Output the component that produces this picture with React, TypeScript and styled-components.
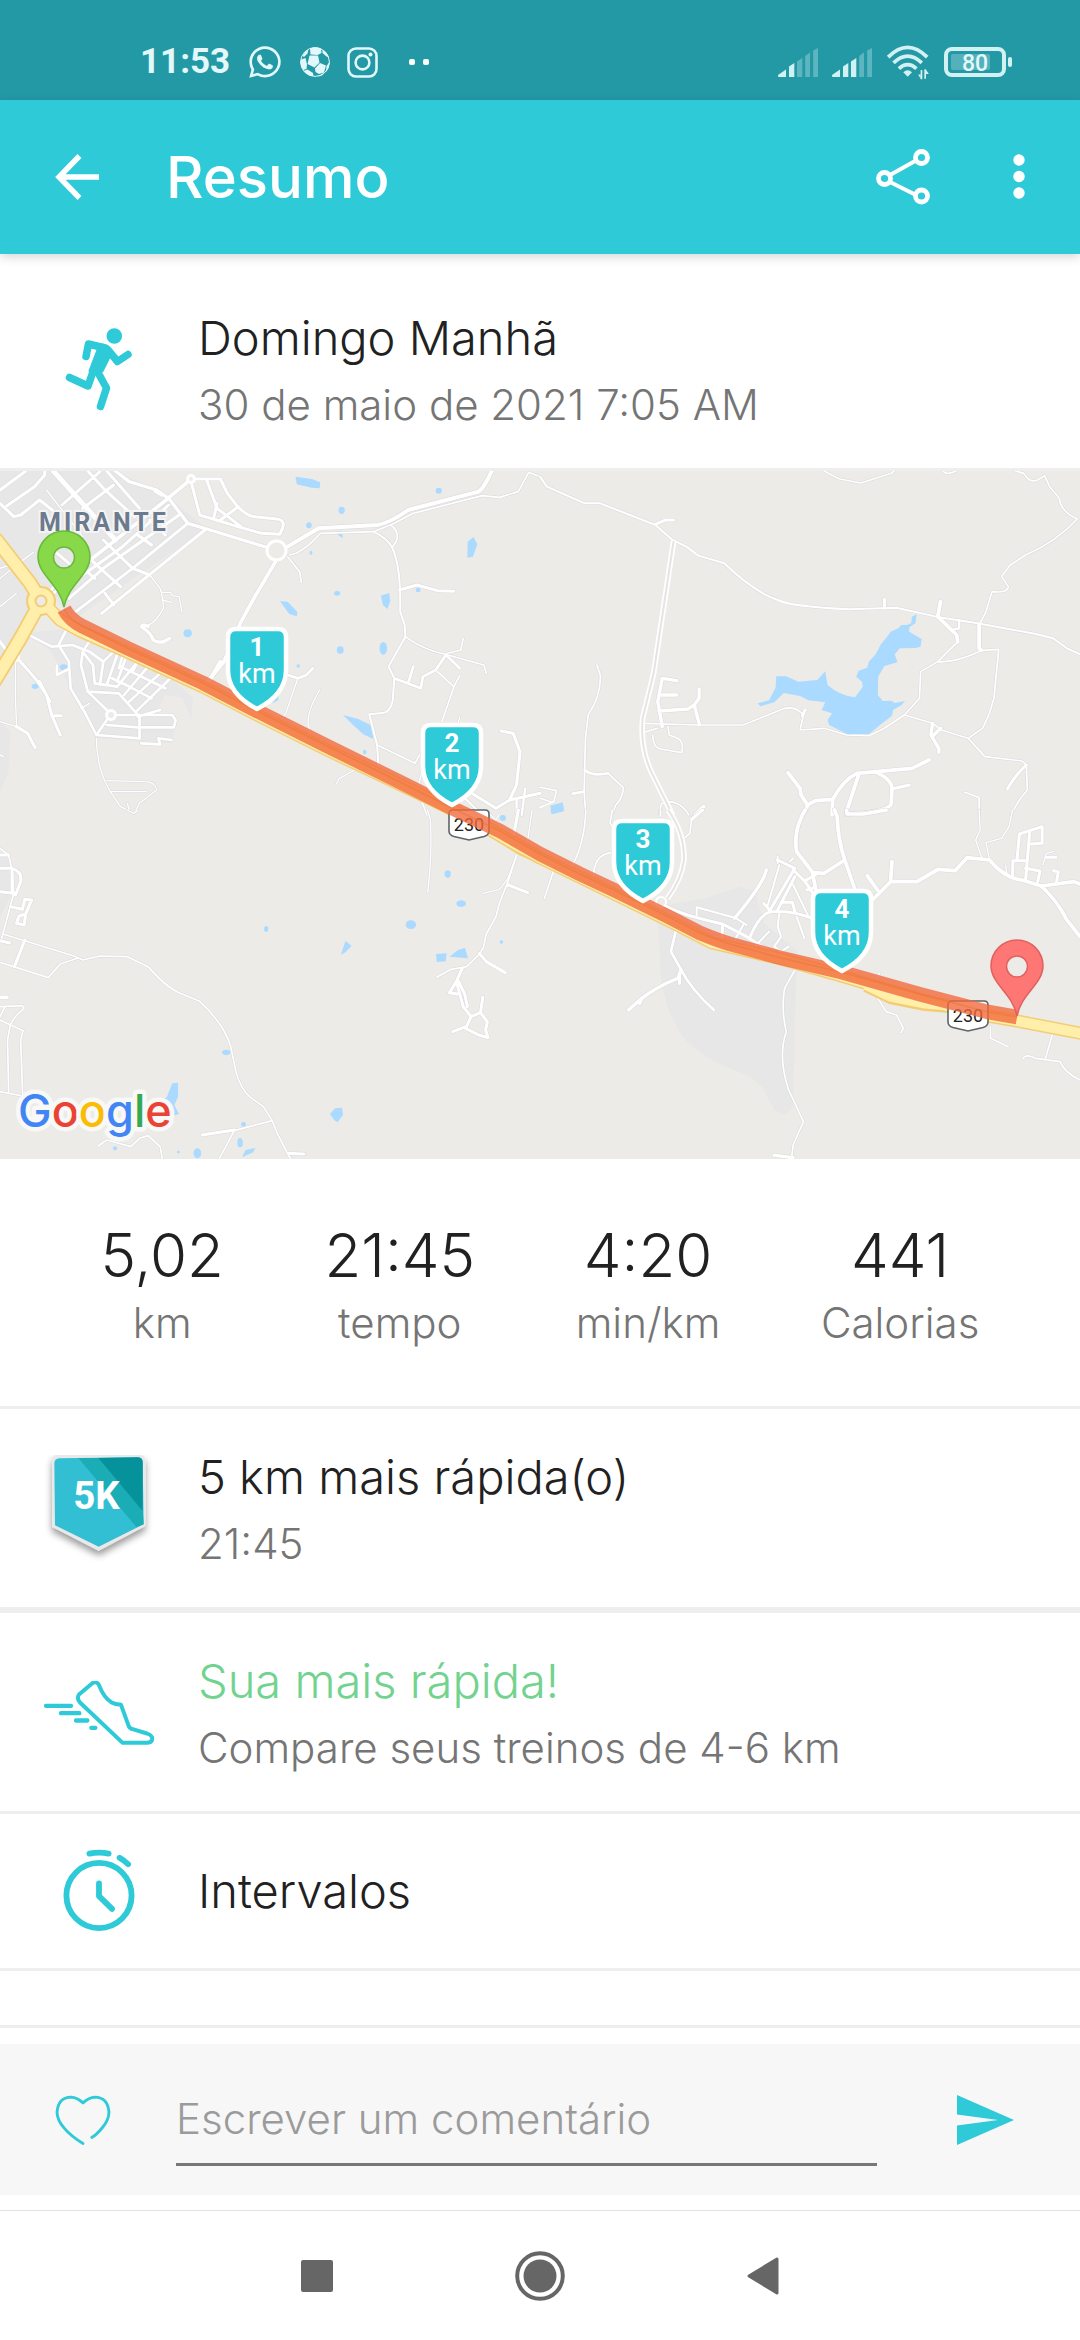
import React from 'react';
import styled, { createGlobalStyle } from 'styled-components';
import { FaWhatsapp } from 'react-icons/fa';

const TEAL = '#2ecad8';
const INK = '#212121';
const MUTED = '#757575';
const LINE = '#eeeeee';
const LAND = '#ecebe7';
const TOWN = '#e7e7e7';
const WATER = '#aadaff';

const GlobalStyle = createGlobalStyle`
  * { box-sizing: border-box; }
  body {
    margin: 0;
    background: #ffffff;
    color: ${INK};
    font-family: Inter, "Liberation Sans", sans-serif;
  }
  svg { display: block; }
`;

/* ---------- layout ---------- */

const Screen = styled.div`
  display: flex;
  flex-direction: column;
  min-height: 100vh;
`;

const StatusBar = styled.div`
  display: flex;
  align-items: center;
  justify-content: space-between;
  height: 100px;
  padding: 24px 68px 0 140px;
  background: #2499a6;
  color: #e2f8fa;
`;

const StatusGroup = styled.div<{ $gap: number }>`
  display: flex;
  align-items: center;
  gap: ${(p) => p.$gap}px;
`;

const Clock = styled.time`
  font: 700 35px/40px Roboto, sans-serif;
`;

const MoreDots = styled.span`
  display: flex;
  gap: 8px;
  margin-left: 14px;
  &::before, &::after {
    content: '';
    width: 6px;
    height: 6px;
    border-radius: 2px;
    background: #ffffff;
  }
`;

const AppBar = styled.header`
  position: relative;
  display: flex;
  align-items: center;
  height: 154px;
  padding: 0 55px;
  background: ${TEAL};
  color: #ffffff;
  box-shadow: 0 3px 10px rgba(0, 0, 0, 0.16);
`;

const AppTitle = styled.h1`
  flex: 1;
  margin: 0 0 0 67px;
  font-size: 58px;
  font-weight: 500;
  line-height: 72px;
`;

const IconButton = styled.button<{ $before?: number }>`
  display: flex;
  flex: none;
  margin: 0 0 0 ${(p) => p.$before ?? 0}px;
  padding: 0;
  border: 0;
  background: none;
  color: inherit;
  cursor: pointer;
`;

const Row = styled.section<{ $top?: number; $bottom?: number }>`
  display: grid;
  grid-template-columns: 198px 1fr;
  align-items: center;
  padding: ${(p) => p.$top ?? 34}px 0 ${(p) => p.$bottom ?? 30}px;
`;

const RowIcon = styled.div`
  display: flex;
  justify-content: center;
`;

const RowTitle = styled.h2<{ $color?: string }>`
  margin: 0;
  color: ${(p) => p.$color ?? INK};
  font-size: 47px;
  font-weight: 350;
  line-height: 68px;
`;

const RowText = styled.p`
  margin: 0;
  color: ${MUTED};
  font-size: 42px;
  font-weight: 350;
  line-height: 66px;
`;

const Divider = styled.hr<{ $size?: number }>`
  width: 100%;
  height: ${(p) => p.$size ?? 3}px;
  margin: 0;
  border: 0;
  background: ${LINE};
`;

const Blank = styled.div`
  height: 54px;
`;

const MapFrame = styled.div`
  background: ${LAND};
  svg { width: 100%; height: auto; }
`;

const Stats = styled.dl`
  display: flex;
  justify-content: space-evenly;
  margin: 0;
  padding: 61px 0 50px;
`;

const Stat = styled.div`
  display: flex;
  flex-direction: column-reverse;
  text-align: center;
`;

const StatLabel = styled.dt`
  color: ${MUTED};
  font-size: 42px;
  font-weight: 350;
  line-height: 66px;
`;

const StatValue = styled.dd`
  margin: 0;
  font-size: 60px;
  font-weight: 350;
  line-height: 70px;
`;

const Footer = styled.footer`
  margin-top: auto;
  padding-top: 16px;
`;

const CommentBar = styled.form`
  display: flex;
  align-items: center;
  height: 151px;
  padding: 0 66px 0 55px;
  background: #f7f7f7;
  color: ${TEAL};
`;

const CommentInput = styled.input`
  flex: 1;
  min-width: 0;
  height: 93px;
  margin-left: 65px;
  padding: 0;
  border: 0;
  border-bottom: 3px solid #757876;
  border-radius: 0;
  outline: 0;
  background: transparent;
  color: ${INK};
  font: 350 42px/60px Inter, "Liberation Sans", sans-serif;
  &::placeholder { color: #9b9b9b; opacity: 1; }
`;

const SystemNav = styled.nav`
  display: flex;
  align-items: center;
  justify-content: center;
  gap: 182px;
  height: 130px;
  margin-top: 15px;
  border-top: 1px solid #e2e2e2;
  color: #666666;
`;

/* ---------- status icons ---------- */

const BallIcon = () => (
  <svg width="30" height="30" viewBox="0 0 30 30">
    <circle cx="15" cy="15" r="14.4" fill="none" stroke="currentColor" strokeWidth="1" />
    <g fill="currentColor">
      <path d="M9.500 8.500 18 8.500 19.500 15.500 14.500 20.500 7.500 17Z" />
      <path d="M10 1.500Q15-1 21 1.500L21.500 6 17.500 8 10.500 7.500Z" />
      <path d="M1 12.500 5.500 11 7 17.500 6.500 22 3 23Q-.5 18 1 12.500Z" />
      <path d="M15 21.500 20 16 26 18.500 24 25.500 19 27 15.500 25Z" />
      <path d="M22.500 2.500Q27.500 5.500 28.800 10.500L26.500 9.500 22.500 6Z" />
      <path d="M3.500 24 7.500 22.500 13 26 13.500 29.300Q7.500 29 3.500 24Z" />
      <path d="M26.500 19 29.500 15Q29.500 21 26 25Z" />
      <path d="M2.500 9Q4.500 4.500 8.500 2.500L7.500 6.500 4 10Z" />
      <path d="M20 28 24 26.500 22 28.500 18 29.700Z" />
    </g>
  </svg>
);

const InstagramIcon = () => (
  <svg width="31" height="31" viewBox="0 0 31 31" fill="none" stroke="currentColor">
    <rect x="1.500" y="1.500" width="28" height="28" rx="7.500" strokeWidth="2.600" />
    <circle cx="15.500" cy="15.500" r="6.900" strokeWidth="2.600" />
    <circle cx="23.500" cy="7.500" r="2" fill="currentColor" stroke="none" />
  </svg>
);

const BARS = ['M0 27 8 21.500V29H1Q0 29 0 28Z', 'M11 18.500 16.300 15V29H11Z', 'M19 13.500 24.300 10V29H19Z', 'M27.200 8 32 4.500V29H27.200Z', 'M35.200 2.500 40 0V29H35.200Z'];

const SignalIcon = ({ level }: { level: number }) => (
  <svg width="40" height="29" viewBox="0 0 40 29" fill="currentColor">
    {BARS.map((d, i) => (
      <path key={d} d={d} opacity={i < level ? 0.92 : 0.3} />
    ))}
  </svg>
);

const WifiIcon = () => (
  <svg width="44" height="35" viewBox="1003 138 128 104" fill="none" stroke="currentColor" strokeWidth="11" opacity="0.92">
    <path d="M1008 174Q1066 116 1124 174" />
    <path d="M1024 191Q1066 151 1108 191" />
    <path d="M1040 208Q1066 185 1092 208" />
    <path d="M1053 219Q1066 207 1079 219L1066 232Z" fill="currentColor" stroke="none" />
    <path d="M1107 212V240M1118 210V238" strokeWidth="5" />
    <path d="M1105 239 1097 226H1105ZM1120 211 1129 224H1120Z" fill="currentColor" stroke="none" />
  </svg>
);

const BatteryIcon = () => (
  <svg width="68" height="30" viewBox="0 0 68 30">
    <rect x="2" y="2" width="58" height="26" rx="6" fill="none" stroke="currentColor" strokeWidth="4" opacity="0.92" />
    <rect x="7" y="7" width="39" height="16" rx="2" fill="currentColor" opacity="0.25" />
    <rect x="64" y="10" width="4" height="10" rx="2" fill="currentColor" opacity="0.92" />
    <text x="31" y="24" textAnchor="middle" fill="currentColor" fontFamily="Roboto, sans-serif" fontWeight="500" fontSize="23">
      80
    </text>
  </svg>
);

/* ---------- app icons ---------- */

const BackArrow = () => (
  <svg width="44" height="46" viewBox="0 0 44 46" fill="none" stroke="currentColor" strokeWidth="5.500">
    <path d="M44 23H4M24.500 2 4 23 24.500 44" />
  </svg>
);

const ShareIcon = () => (
  <svg width="54" height="56" viewBox="0 0 54 56" fill="none" stroke="currentColor" strokeWidth="4.800">
    <path d="M14 26 40 11.500M14 33 39 45.500" strokeWidth="4" />
    <circle cx="8.500" cy="29.500" r="6" />
    <circle cx="45.500" cy="8.500" r="6" />
    <circle cx="45.500" cy="47" r="6" />
  </svg>
);

const KebabIcon = () => (
  <svg width="12" height="46" viewBox="0 0 12 46" fill="currentColor">
    <circle cx="6" cy="6" r="5.700" />
    <circle cx="6" cy="22.500" r="5.700" />
    <circle cx="6" cy="39" r="5.700" />
  </svg>
);

const RunnerIcon = () => (
  <svg width="70" height="86" viewBox="64 328 70 86" fill="none" stroke={TEAL} strokeWidth="7.500" strokeLinecap="round" strokeLinejoin="round">
    <circle cx="114.300" cy="336" r="7.800" fill={TEAL} stroke="none" />
    <path d="M105 348 88.500 344 86 356.500" />
    <path d="M108 350 117.500 361.500 128 354.500" />
    <path d="M102 345 108 347 111 353 102 371 90 371 98 350Z" fill={TEAL} strokeWidth="3" />
    <path d="M94 369 88 386 69.500 377.500" />
    <path d="M96 369 106.500 388 100.500 406.500" />
  </svg>
);

const BadgeIcon = () => (
  <svg width="110" height="110" viewBox="132 162 330 330">
    <defs>
      <filter id="lift" x="-20%" y="-20%" width="140%" height="150%">
        <feDropShadow dx="0" dy="14" stdDeviation="11" floodColor="#000000" floodOpacity="0.4" />
      </filter>
    </defs>
    <path filter="url(#lift)" d="M170 162H421Q436 162 436 177V375L296 449 156 377V177Q156 162 170 162Z" fill="#e9e9e9" />
    <path d="M163 187Q163 173 178 172L412 169Q428 169 428 183L431 370 296 437 165 373Z" fill="#33bfd3" />
    <path d="M235 171H296L428 328 431 370 409 378Z" fill="#1aadb5" />
    <path d="M295 171 412 169Q428 169 428 183V330Z" fill="#05929a" />
    <text x="289" y="325" textAnchor="middle" fill="#ffffff" fontFamily="Roboto, sans-serif" fontWeight="700" fontSize="115">
      5K
    </text>
  </svg>
);

const ShoeIcon = () => (
  <svg width="110" height="67" viewBox="132 844 330 200" fill="none" stroke={TEAL} strokeWidth="12" strokeLinecap="round" strokeLinejoin="round">
    <path d="M237 884 277 850Q291 842 298 858 311 893 335 908 345 914 363 915L386 978Q388 985 398 988L441 1001Q457 1007 457 1017 455 1029 441 1029H368L240 908Q229 896 237 884Z" />
    <path d="M138 918H213M183 940H238M228 962H262M274 984H286" strokeWidth="13" />
  </svg>
);

const StopwatchIcon = () => (
  <svg width="72" height="83" viewBox="183 146 210 241" fill="none" stroke={TEAL} strokeWidth="17" strokeLinecap="round" strokeLinejoin="round">
    <circle cx="288" cy="281" r="95" />
    <path d="M260 159Q288 153 316 159M348 171Q362 179 373 190M288 246V283L326 320" />
  </svg>
);

const HeartIcon = () => (
  <svg width="56" height="52" viewBox="158 852 164 150" fill="none" stroke={TEAL} strokeWidth="8.500" strokeLinecap="round" strokeLinejoin="round">
    <path d="M240 996Q204 974 185 951 164 926 164 904 167 861 205 860 223 861 240 877 257 861 275 860 313 861 316 904 316 926 297 949 278 972 266 978" />
  </svg>
);

const SendIcon = () => (
  <svg width="57" height="50" viewBox="0 0 57 50" fill={TEAL}>
    <path d="M0 0 57 25 0 50V30.500L41 25 0 19.500Z" />
  </svg>
);

/* ---------- map ---------- */

type Road = [number, string];
type Tile = { x: number; y: number; town: string[]; water: string; ponds: number[][]; roads: Road[]; twin?: string };

const TILES: Tile[] = [
  {
    x: 0,
    y: -6,
    town: [
      'M0 18H340L490 100 600 190 220 460 120 370 0 210Z',
      'M0 240 85 350 80 440 0 590Z',
      'M75 505 200 490 500 645 560 700 555 765 530 700 480 690 450 745 515 760 500 835 280 820 200 660 150 560Z',
      'M0 770 30 800 25 920 0 980Z',
    ],
    water:
      'M858 35L905 42 930 52 928 70 905 68 862 58ZM972 202 994 198 995 220ZM1358 230 1375 216 1386 238 1373 275 1357 278ZM1106 392 1130 384 1133 408 1125 432 1112 420ZM813 409 835 410 863 440 862 454 840 447ZM996 750 1040 762 1076 780 1084 822 1055 808 1025 780ZM790 715 808 692 808 706Z',
    ponds: [[1274, 77, 9, 9], [992, 136, 9, 11], [897, 181, 8, 9], [903, 263, 4, 6], [979, 385, 9, 7], [1214, 375, 7, 7], [545, 505, 12, 12], [988, 555, 10, 11], [1113, 550, 11, 19], [866, 603, 5, 5], [185, 607, 12, 9], [102, 664, 10, 8], [1059, 861, 5, 7]],
    roads: [
      [15, 'M155 18 335 225'],
      [9, 'M0 75 75 18M0 115 40 155 60 150 115 105 170 150M20 122 100 65 130 30V18M255 18 300 70 390 155M310 18 405 130M180 120 290 20M240 130 330 60'],
      [4, 'M135 75 240 215M0 340 60 290M60 290 98 262M0 425 48 385M0 310 60 290'],
      [11, 'M555 42 470 115 330 230 262 285'],
      [10, 'M335 18 375 50 455 75 490 100 545 175 600 192 772 246M470 90 450 78'],
      [9, 'M565 42H640L660 85 690 125Q720 155 740 155L810 163Q828 168 820 190L812 208 760 205 690 185 580 150 565 90 555 50M600 45 630 130 700 185M630 115 620 162M692 125 640 165'],
      [9, 'M545 175 385 310 220 440M595 195 435 328 295 445M490 120 350 250 240 330M520 150 300 310 200 400M300 225 385 310 435 330M270 290 350 365M400 210 440 240M435 165 480 210M305 385 330 420M220 290 275 340M160 260 240 330M170 350 110 420M150 390 200 340'],
      [4, 'M435 330 465 370Q475 400 475 430 450 475 430 480M470 382H495L500 392 520 395 528 440M470 405 500 412'],
      [10, 'M430 485Q415 475 410 485 440 505 445 525 465 540 492 520'],
      [12, 'M835 245 925 190 1095 180Q1130 175 1185 135L1390 80Q1405 70 1428 18'],
      [5, 'M840 270Q880 265 930 205L1085 200 1145 175 1200 145 1400 92 1450 97 1505 80 1535 22 1568 35M835 275 870 320 875 352M1135 180Q1170 210 1140 245'],
      [11, 'M800 290 740 395 700 470 650 590 590 665'],
      [12, 'M640 590 610 645'],
      [6, 'M1085 200Q1125 220 1140 250 1165 310 1162 440L1175 480 1177 515 1128 605 1145 640 1140 710Q1130 745 1110 744L1072 748 1095 840 1100 920'],
      [9, 'M1160 375 1210 360 1270 377 1318 379'],
      [5, 'M1177 515Q1230 555 1290 567L1405 600 1412 625M1345 520 1338 555 1300 565M1270 620 1318 665 1335 632M1318 665 1283 770'],
      [8, 'M1295 570 1265 615 1228 635 1222 670 1150 642M1200 605 1185 655M1295 570 1335 610'],
      [8, 'M835 630 865 640 890 630 908 610'],
      [4, 'M865 640 830 745 805 780M928 675Q890 740 895 780L905 820M1030 915 985 940 977 957M1225 920 1210 980M1335 755 1330 775'],
      [5, 'M1095 840 1205 895 1218 870M1225 1010 1240 1050'],
      [9, 'M1455 798 1490 805 1510 860 1500 960 1480 1005 1440 1030 1370 985M1480 1005 1568 985'],
      [7, 'M1525 970 1515 1050M1500 1000 1500 1050M1350 1000 1400 1050'],
      [8, 'M75 505 150 545 210 540 260 560 300 590 330 560M195 490 170 540 200 590 205 670 245 740 280 810 405 820M165 602V630L200 612M45 575 75 505'],
      [8, 'M262 525 240 560 270 600 275 655 340 665 400 590M240 560 235 600 255 680 345 685 405 755V820M300 590 290 660M340 570 310 660M365 580 340 650M430 605 360 690M465 625 375 710M495 640 395 740M325 640 385 670 440 700M350 605 480 670M360 560 345 610M400 590 385 620'],
      [8, 'M340 750H500L510 765 505 787 400 787 310 780M255 680 310 735M310 765 280 810M410 835 465 838 460 820 498 825M400 755 465 735'],
      [4, 'M45 590 45 700 48 785 0 770M0 870 10 875M235 730 260 715'],
      [9, 'M48 785 80 805 102 848M55 585 85 620 110 650 135 690 150 750 175 810M115 650 145 710M150 752 178 752M0 530 25 565'],
      [4, 'M280 820Q280 910 320 980L350 1025 390 1045 405 1015 455 975Q450 950 420 950L310 947M320 980H425M370 1015 375 1035'],
    ],
  },
  {
    x: 540,
    y: -6,
    town: [],
    water:
      'M1080 455 1094 448 1090 475 1072 487V500L1108 522 1105 545 1090 549 1045 550 1030 568 1038 592 1000 603 982 635 981 690 995 708 1020 707 1030 714 1060 708 1050 720 1025 735 1022 752 990 778 955 807 892 808 840 780 835 765 848 745 818 735 828 712 780 706 755 693 708 684 680 712 640 724 632 715 665 706 684 668 686 634 715 634 750 650 805 645 828 619 835 660Q870 692 915 697L937 665 935 650 918 635 925 617 950 608 955 590 975 567 990 538 1012 510 1018 500 1040 490 1050 480 1065 480 1078 475ZM30 1022 66 1012 70 1036 34 1048Z',
    ponds: [],
    twin: 'M388 228 330 625 298 760Q290 850 325 925L385 1050',
    roads: [
      [6, 'M0 35 20 65 130 115 175 115 335 180 385 225 425 245 460 272 535 295Q620 380 690 405 730 425 900 433L1035 428 1150 455 1270 475 1440 507 1490 520 1530 550 1568 567'],
      [9, 'M335 178 365 165 388 165M1000 402V430M770 735 762 752'],
      [5, 'M825 18 870 42 932 54 1020 25 1028 18M1170 18Q1180 32 1208 18M1380 18 1405 25Q1420 55 1445 45L1465 32 1480 65 1508 100Q1512 140 1560 162 1500 230 1410 270L1365 300 1340 335 1360 365Q1358 385 1312 380L1295 440 1278 475'],
      [11, 'M1163 410 1155 455 1210 510 1213 530M1275 478V550L1282 556'],
      [7, 'M1217 465V490L1195 495'],
      [5, 'M1213 530 1155 590 1105 620 1102 700 1058 750 1000 790 955 812 890 810 825 790 755 795 765 750Q740 720 705 732L590 780 460 780 300 775M1282 556 1332 553 1318 700 1305 745 1285 790 1243 820 1165 795 1140 775 1058 750M1155 590Q1200 595 1280 558'],
      [10, 'M355 785 342 710 355 640 397 647M345 690H397M345 738 430 732 448 720 462 700V672M448 720 463 780'],
      [5, 'M327 810Q330 850 350 852L412 863Q418 830 400 820L375 810 372 785M300 803 340 790M165 600 175 630Q178 690 140 750L132 820 128 980 133 1050M198 925 242 968Q240 1000 220 1020L208 1050M0 967 48 977 40 1010 0 1028M0 1000 35 1012'],
      [8, 'M130 915Q150 935 198 925M95 986 128 980'],
      [10, 'M1140 775 1135 810 1158 850V862M1163 790 1142 812'],
      [5, 'M1243 820 1292 875 1400 888 1412 900 1415 975Q1385 1010 1368 1050M1233 982 1275 998V1050M348 1050Q345 1010 370 1010 410 1010 432 1050'],
      [9, 'M1412 900Q1380 930 1357 972M1022 972 1072 960'],
      [11, 'M720 923 755 970 758 990 777 1020 765 1050M777 1020 800 1007 850 1003Q880 945 920 925L1080 910 1130 885M850 1003 848 1050M925 930 890 1040M970 920Q1020 940 1022 970L1020 1015Q1015 1040 890 1048M475 1025 450 1050'],
    ],
  },
  {
    x: 0,
    y: 339,
    town: ['M0 130H25L35 250 0 320Z'],
    water:
      'M1003 393 1021 407 1003 427 990 434ZM1266 432 1297 430 1294 454 1268 456ZM1305 440 1330 420 1350 414 1359 445ZM958 912 973 895 993 893 996 915 980 937 970 930ZM500 820 517 818 517 860 506 885 520 912 500 918 460 880 485 860ZM703 1042 713 1020 741 1014 735 1027Z',
    ponds: [[1300, 192, 9, 11], [1339, 281, 14, 10], [1193, 344, 15, 13], [1456, 396, 5, 5], [773, 357, 6, 9], [657, 727, 12, 8], [573, 1030, 11, 15], [697, 998, 8, 14], [707, 943, 7, 7], [334, 1015, 6, 6], [518, 1026, 4, 4], [1460, 24, 9, 9]],
    roads: [
      [5, 'M0 115 25 135 35 180 40 250 5 385'],
      [9, 'M0 135H25M0 175H35Q65 185 60 215L45 255M35 180V245M0 245 40 250M30 290 65 298 72 268 92 270 75 310 70 345 48 340 55 318 75 312M72 390 42 470M0 392 28 399'],
      [5, 'M8 372 215 438 240 450 290 438 370 440 430 470Q480 530 520 548L578 573Q650 640 670 710L685 785Q700 840 725 860L765 890 790 932 805 970 845 1050M0 457 140 503 175 462 225 445M0 590 65 587 70 595Q40 620 30 645L22 690 25 850M0 630 67 662 60 690 66 858 0 845M15 590 0 620M790 932 680 962 635 1050M285 1008 310 990 380 1010 405 985 430 977 465 1010 472 1050'],
      [11, 'M0 562H20'],
      [9, 'M587 975 680 960M837 1030 882 1032'],
      [4, 'M368 0 390 10 400 0M1241 0 1250 30Q1255 130 1242 248M1545 0 1530 105M1420 10 1440 30 1450 12M1500 135 1475 205 1450 238 1402 250'],
      [5, 'M1500 135 1475 215 1450 280 1440 320 1412 372 1403 415 1392 432 1355 470 1310 478 1268 502'],
      [9, 'M1475 225 1532 248M1392 430 1412 455 1467 488M1342 475 1325 515 1345 590 1368 620 1395 608 1415 635 1410 660 1417 683 1390 675 1352 655 1368 620M1325 515 1305 548 1328 552M1332 515 1350 555 1357 590M1402 562 1395 608M1352 650 1315 665M1505 0 1490 85'],
    ],
  },
  {
    x: 540,
    y: 339,
    town: ['M340 290 480 265 580 230 625 245 650 340 745 420 735 890 710 915 680 900 645 830 600 795Q480 750 430 700 350 600 348 440Z'],
    water: 'M30 0H70L66 5 34 12Z',
    ponds: [],
    twin: 'M372 0Q420 70 418 150 410 210 370 265',
    roads: [
      [5, 'M133 0Q130 100 92 170M210 0 203 40 225 70M205 128Q155 135 155 205M350 0V20M412 90 435 70 440 30'],
      [9, 'M472 0 440 28M360 285Q400 312 530 342L600 380 680 432M530 345 528 390M610 380Q640 310 670 305 740 300 800 330M690 150 740 175 665 305M650 280 670 305M735 180 770 215 800 262M770 212 800 195M775 240 800 232M700 277H733L740 305M690 300 740 200'],
      [6, 'M455 315V292L570 325 600 345M690 140V160M695 165 660 290M735 225 780 320M745 320 768 385M695 310 690 350 700 380 680 410 700 425 722 410M665 365 605 430M590 345 560 400M725 155 735 145'],
      [10, 'M657 180Q650 220 565 325'],
      [11, 'M770 0Q735 60 745 125L790 185 820 330M790 188 825 190 885 150M855 0 863 20Q865 90 885 150L915 240M890 0 892 12 940 12 1005 0'],
      [11, 'M965 270 1018 215H1095L1155 178 1205 182 1240 143 1305 150Q1350 205 1400 210L1455 228 1550 215 1568 222M1455 228Q1500 270 1530 330L1568 380M950 197 980 240M1018 215 1022 155'],
      [4, 'M1283 145 1265 90 1278 60 1275 0M1372 0 1362 50 1340 85 1295 98 1305 150M1460 165 1470 130 1492 125M1352 165 1355 190'],
      [9, 'M1372 205 1373 152H1415M1385 150 1392 72 1458 50V100L1425 102M1422 65 1410 210M1410 175 1452 183 1445 215M1500 215 1505 185 1490 182M1470 142H1498'],
      [5, 'M40 180 13 265M740 480 710 535Q700 600 715 665 690 740 722 840L765 935 735 1005 730 1050M980 563 1005 605 1035 615 1055 655 1048 668M985 490 975 515M1308 650V685L1360 710M1488 672 1468 745M1403 745Q1410 730 1440 745L1510 755Q1525 790 1568 810'],
      [8, 'M395 360 380 425 410 480Q440 540 505 600'],
      [10, 'M410 480 400 505Q330 535 290 570L257 600M405 490V520M295 565 290 580M680 1036 735 1043'],
    ],
  },
];

const HIGHWAY = 'M46 134 60 149 80 160 127 181 203 216 257 244 327 279 430 328 479 352 540 387 614 423 671 451 712 472 781 488 841 505 919 528 988 545 1017 550 1085 563';
const ROUTE = 'M64 138Q70 149 82 155L127 177 203 212 257 240 327 275 400 311 450 336 500 360 540 383 580 403 614 419 667 445 700 462Q717 469 730 473L781 487 841 501 919 523 988 541 1017 546';

const CourseMarker = ({ x, y, km }: { x: number; y: number; km: number }) => (
  <g transform={`translate(${x} ${y})`}>
    <path
      d="M-21-83H21Q29-83 29-75V-42Q29-18 0-3-29-18-29-42V-75Q-29-83-21-83Z"
      fill={TEAL}
      stroke="#ffffff"
      strokeWidth="4.500"
      strokeLinejoin="round"
    />
    <g fill="#ffffff" textAnchor="middle">
      <text y="-56" fontFamily="Roboto, sans-serif" fontWeight="700" fontSize="26">{km}</text>
      <text y="-29" fontFamily="Roboto, sans-serif" fontWeight="400" fontSize="27">km</text>
    </g>
  </g>
);

const Pin = ({ x, y, fill, edge }: { x: number; y: number; fill: string; edge: string }) => (
  <path
    transform={`translate(${x} ${y})`}
    d="M0 0C-4-22-26-32-26-50A26 26 0 0 1 26-50C26-32 4-22 0 0ZM0-60A10.500 10.500 0 1 0 0-39 10.500 10.500 0 1 0 0-60Z"
    fill={fill}
    fillRule="evenodd"
    stroke={edge}
    strokeWidth="1.500"
  />
);

const RouteShield = ({ x, y }: { x: number; y: number }) => (
  <g transform={`translate(${x} ${y})`}>
    <path d="M-16 0H16Q20 0 20 4V21Q20 25 15 26.500L0 30-15 26.500Q-20 25-20 21V4Q-20 0-16 0Z" fill="#ffffff" stroke="#5f6468" strokeWidth="1.600" />
    <text y="21" textAnchor="middle" fill="#222222" fontFamily="Roboto, sans-serif" fontSize="18">230</text>
  </g>
);

const GOOGLE: [string, string][] = [['G', '#4285f4'], ['o', '#ea4335'], ['o', '#fbbc05'], ['g', '#4285f4'], ['l', '#34a853'], ['e', '#ea4335']];

const RouteMap = () => (
  <MapFrame>
    <svg viewBox="0 0 1080 688" role="img" aria-label="Mapa do percurso">
      <rect width="1080" height="688" fill={LAND} />
      {TILES.map((t) => (
        <g key={`${t.x}:${t.y}`} transform={`translate(${t.x} ${t.y}) scale(0.3444 0.3333)`} fill="none" strokeLinejoin="round">
          {t.town.map((d) => <path key={d} d={d} fill={TOWN} />)}
          <path d={t.water} fill={WATER} />
          {t.ponds.map(([cx, cy, rx, ry]) => <ellipse key={`${cx}-${cy}`} cx={cx} cy={cy} rx={rx} ry={ry} fill={WATER} />)}
          <g stroke="#d9d9de" strokeLinecap="round">
            {t.roads.map(([w, d]) => <path key={d} d={d} strokeWidth={w + 3} />)}
          </g>
          <g stroke="#ffffff" strokeLinecap="round">
            {t.roads.map(([w, d]) => <path key={d} d={d} strokeWidth={w} />)}
          </g>
          {t.twin && (
            <>
              <path d={t.twin} stroke="#ffffff" strokeWidth="16" />
              <path d={t.twin} stroke="#e6e5e3" strokeWidth="6" />
            </>
          )}
        </g>
      ))}
      <g fill={LAND} stroke="#ffffff" strokeWidth="3">
        <circle cx="276.500" cy="79.500" r="9.500" />
        <circle cx="191" cy="8" r="3.500" />
        <circle cx="14.500" cy="186" r="4" />
        <circle cx="111" cy="244" r="4.500" />
        <circle cx="661" cy="431" r="5" strokeWidth="2" />
      </g>
      <g fill="none" strokeLinejoin="round">
        <g stroke="#f3cd74">
          <path d="M-5 67 30 112 41 130 20 168-6 211" strokeWidth="15" />
          <circle cx="41" cy="130" r="14" strokeWidth="2" fill="#f3cd74" />
          <path d={HIGHWAY} strokeWidth="13" />
          <path d="M489 361 520 380 540 389M865 517 890 529 925 536 950 538" strokeWidth="8" />
        </g>
        <g stroke="#ffefaa">
          <path d="M-5 67 30 112 41 130 20 168-6 211" strokeWidth="11.500" />
          <circle cx="41" cy="130" r="12.500" strokeWidth="1" fill="#ffefaa" />
          <path d={HIGHWAY} strokeWidth="10" />
          <path d="M489 360 520 378 540 387M865 515 890 527 925 534 950 536" strokeWidth="7" />
        </g>
        <circle cx="41" cy="130" r="5.500" fill="#ecebe7" stroke="#f3cd74" strokeWidth="2" />
      </g>
      <RouteShield x={469} y={339} />
      <RouteShield x={968} y={530} />
      <path d={ROUTE} fill="none" stroke="#f2683a" strokeOpacity="0.78" strokeWidth="14.500" strokeLinejoin="round" />
      <path d={ROUTE} fill="none" stroke="#e8702c" strokeOpacity="0.45" strokeWidth="1.500" />
      <text
        x="39"
        y="60"
        fill="#6b7a8c"
        stroke="#f4f4f4"
        strokeWidth="4"
        paintOrder="stroke"
        fontFamily="Roboto, sans-serif"
        fontWeight="700"
        fontSize="25"
        letterSpacing="3"
      >
        MIRANTE
      </text>
      <Pin x={64} y={136} fill="#88d94a" edge="#6ab93a" />
      <Pin x={1017} y={545} fill="#ff7775" edge="#e0625f" />
      <CourseMarker x={257} y={241} km={1} />
      <CourseMarker x={452} y={337} km={2} />
      <CourseMarker x={643} y={433} km={3} />
      <CourseMarker x={842} y={503} km={4} />
      <text x="18" y="656" stroke="#f8f8f6" strokeWidth="9" strokeLinejoin="round" paintOrder="stroke" fontFamily="Inter, sans-serif" fontWeight="500" fontSize="45">
        {GOOGLE.map(([c, fill], i) => <tspan key={i} fill={fill}>{c}</tspan>)}
      </text>
    </svg>
  </MapFrame>
);

/* ---------- page ---------- */

const STATS = [
  { value: '5,02', label: 'km' },
  { value: '21:45', label: 'tempo' },
  { value: '4:20', label: 'min/km' },
  { value: '441', label: 'Calorias' },
];

export default function App() {
  return (
    <Screen>
      <GlobalStyle />
      <StatusBar>
        <StatusGroup $gap={17}>
          <Clock>11:53</Clock>
          <FaWhatsapp size={36} />
          <BallIcon />
          <InstagramIcon />
          <MoreDots />
        </StatusGroup>
        <StatusGroup $gap={14}>
          <SignalIcon level={2} />
          <SignalIcon level={3} />
          <WifiIcon />
          <BatteryIcon />
        </StatusGroup>
      </StatusBar>

      <AppBar>
        <IconButton type="button" aria-label="Voltar"><BackArrow /></IconButton>
        <AppTitle>Resumo</AppTitle>
        <IconButton type="button" aria-label="Compartilhar"><ShareIcon /></IconButton>
        <IconButton type="button" aria-label="Mais opções" $before={83}><KebabIcon /></IconButton>
      </AppBar>

      <main>
        <Row $top={50}>
          <RowIcon><RunnerIcon /></RowIcon>
          <div>
            <RowTitle>Domingo Manhã</RowTitle>
            <RowText>30 de maio de 2021 7:05 AM</RowText>
          </div>
        </Row>
        <Divider />
        <RouteMap />
        <Stats>
          {STATS.map((s) => (
            <Stat key={s.label}>
              <StatLabel>{s.label}</StatLabel>
              <StatValue>{s.value}</StatValue>
            </Stat>
          ))}
        </Stats>
        <Divider />
        <Row>
          <RowIcon><BadgeIcon /></RowIcon>
          <div>
            <RowTitle>5 km mais rápida(o)</RowTitle>
            <RowText>21:45</RowText>
          </div>
        </Row>
        <Divider $size={6} />
        <Row>
          <RowIcon><ShoeIcon /></RowIcon>
          <div>
            <RowTitle $color="#72d38f">Sua mais rápida!</RowTitle>
            <RowText>Compare seus treinos de 4-6 km</RowText>
          </div>
        </Row>
        <Divider />
        <Row $top={35} $bottom={36}>
          <RowIcon><StopwatchIcon /></RowIcon>
          <RowTitle>Intervalos</RowTitle>
        </Row>
        <Divider />
        <Blank />
        <Divider />
      </main>

      <Footer>
        <CommentBar onSubmit={(e) => e.preventDefault()}>
          <IconButton type="button" aria-label="Curtir"><HeartIcon /></IconButton>
          <CommentInput type="text" aria-label="Comentário" placeholder="Escrever um comentário" />
          <IconButton type="submit" aria-label="Enviar" $before={80}><SendIcon /></IconButton>
        </CommentBar>
        <SystemNav aria-label="Sistema">
          <IconButton type="button" aria-label="Recentes">
            <svg width="32" height="32" viewBox="0 0 32 32"><rect width="32" height="32" rx="2" fill="currentColor" /></svg>
          </IconButton>
          <IconButton type="button" aria-label="Início">
            <svg width="50" height="50" viewBox="0 0 50 50">
              <circle cx="25" cy="25" r="22.800" fill="none" stroke="currentColor" strokeWidth="4" />
              <circle cx="25" cy="25" r="16.500" fill="currentColor" />
            </svg>
          </IconButton>
          <IconButton type="button" aria-label="Anterior">
            <svg width="32" height="38" viewBox="0 0 32 38">
              <path d="M2 19 30 2V36Z" fill="currentColor" stroke="currentColor" strokeWidth="3" strokeLinejoin="round" />
            </svg>
          </IconButton>
        </SystemNav>
      </Footer>
    </Screen>
  );
}
